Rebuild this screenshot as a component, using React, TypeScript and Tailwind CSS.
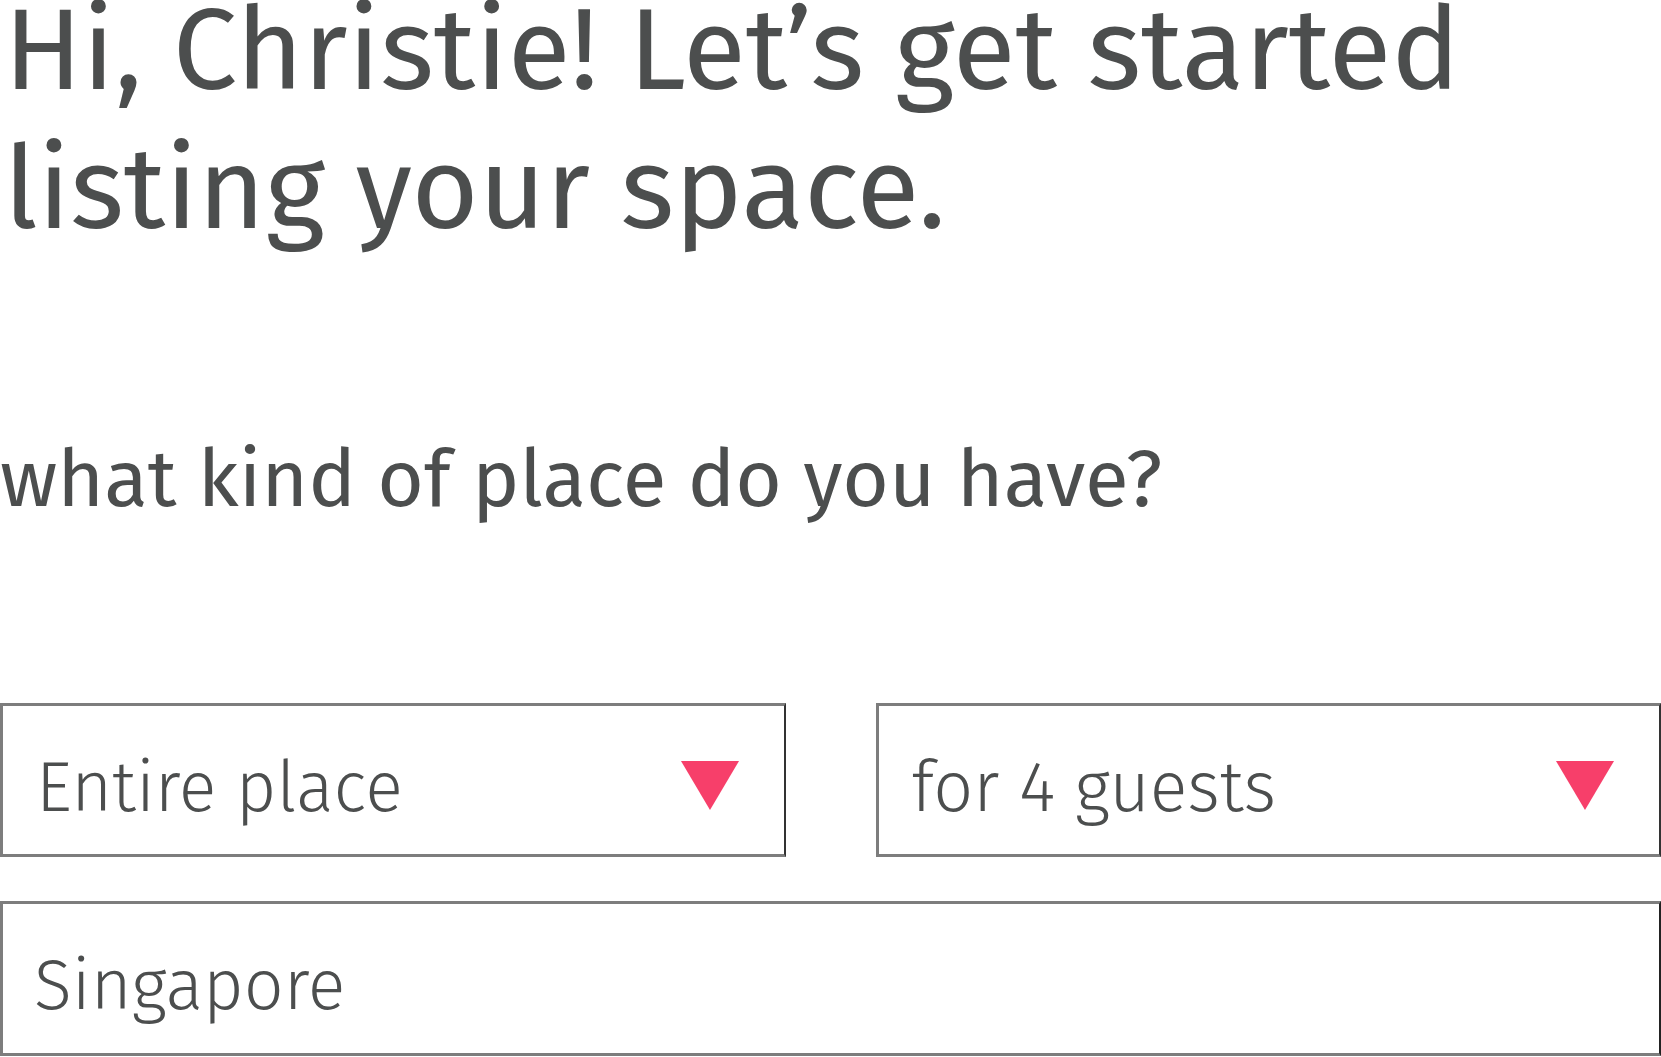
import { useState } from 'react'

const FONT = "font-['Fira_Sans','Open_Sans','Noto_Sans',sans-serif]"

function Caret() {
  return (
    <svg width="58" height="49" viewBox="0 0 58 49" className="mt-[10px] shrink-0">
      <polygon points="0,0 58,0 29,49" fill="#f73f6a" />
    </svg>
  )
}

function SelectBox({ value }: { value: string }) {
  return (
    <div className="flex h-[154px] items-center justify-between border-[3px] border-[#7d7d7d] border-r-2 border-r-[#333] pl-[33px] pr-[45px]">
      <span className="mt-[15px] text-[70px] font-light leading-none">{value}</span>
      <Caret />
    </div>
  )
}

export default function App() {
  const [city] = useState('Singapore')

  return (
    <div className={`${FONT} min-h-screen w-full bg-white text-[#4c4e4e]`}>
      {/* Heading */}
      <h1 className="flex flex-col gap-[38px] pl-[4px] text-[115px] font-normal leading-[101px]">
        <span>Hi, Christie! Let’s get started</span>
        <span>listing your space.</span>
      </h1>

      <h2 className="mt-[199px] text-[80px] font-normal leading-none">
        what kind of place do you have?
      </h2>

      {/* Fields */}
      <div className="mt-[184px] grid grid-cols-2 gap-x-[90px]">
        <SelectBox value="Entire place" />
        <SelectBox value="for 4 guests" />
      </div>

      <div className="mt-[44px] flex h-[155px] items-center border-[3px] border-[#7d7d7d] border-r-2 border-r-[#222] pl-[31px]">
        <span className="mt-[15px] text-[70px] font-light leading-none">{city}</span>
      </div>
    </div>
  )
}
